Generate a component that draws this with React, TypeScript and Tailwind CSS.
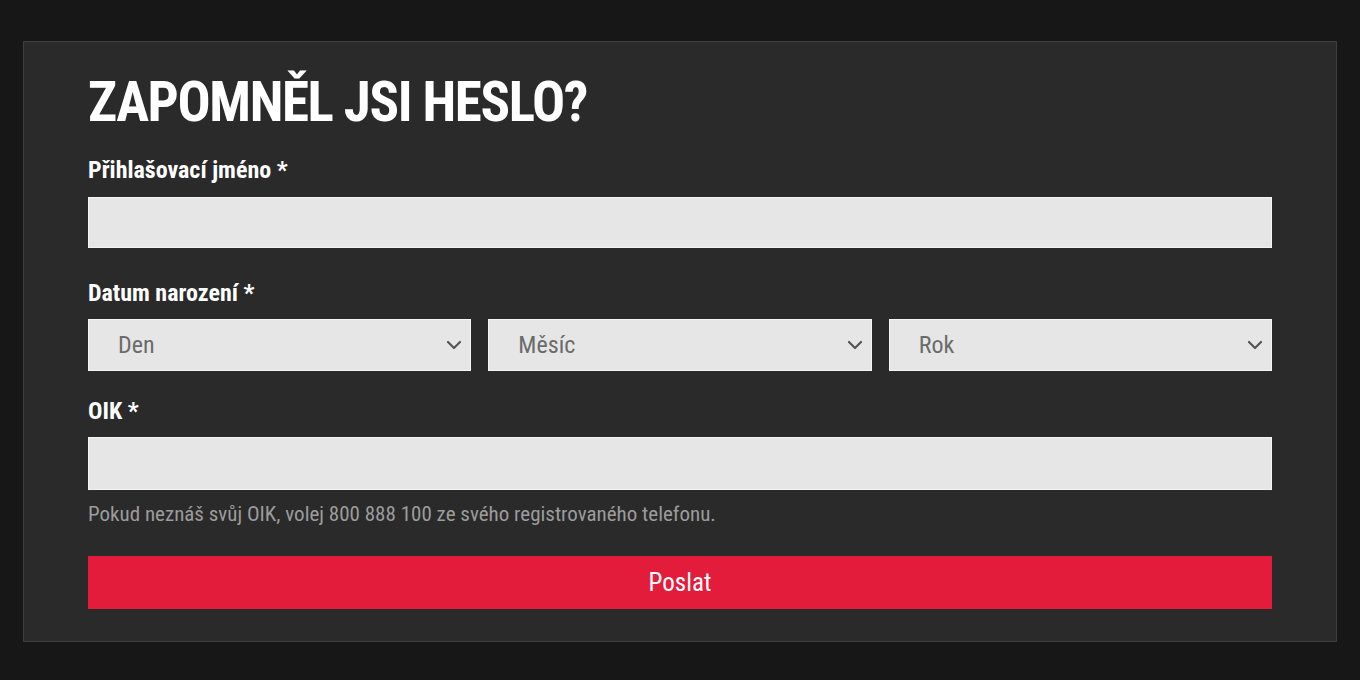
import React from 'react';

const font = { fontFamily: '"Roboto Condensed", Roboto, "Liberation Sans Narrow", sans-serif' };

const Chevron: React.FC = () => (
    <svg className="w-[16px] h-[10px] text-[#555]" viewBox="0 0 16 10" fill="none" stroke="currentColor" strokeWidth={2.2}>
        <path d="M2 2l6 6 6-6" strokeLinecap="round" strokeLinejoin="round" />
    </svg>
);

const SelectBox: React.FC<{ label: string }> = ({ label }) => (
    <div className="flex items-center justify-between h-[52px] bg-[#e6e6e6] border border-[#f4f4f4] pl-[29px] pr-[8px]">
        <span className="text-[24px] text-[#6b6b6b]">{label}</span>
        <Chevron />
    </div>
);

const Label: React.FC<{ text: string; className: string }> = ({ text, className }) => (
    <label className={`block text-[24px] leading-[36px] font-bold text-white ${className}`}>{text}</label>
);

const App: React.FC = () => {
    return (
        <div className="min-h-screen bg-[#171717] pt-[41px] px-[23px]" style={font}>
            <div className="bg-[#2a2a2a] border border-[#3e3e3e] px-[64px] pt-[33px] pb-[32px] font-stretch-condensed">
                <h1 className="text-[55px] leading-none font-bold text-white tracking-tight">ZAPOMNĚL JSI HESLO?</h1>
                <Label text="Přihlašovací jméno *" className="mt-[22px]" />
                <div className="mt-[9px] h-[51px] bg-[#e6e6e6] border border-[#f4f4f4]"></div>
                <Label text="Datum narození *" className="mt-[27px]" />
                <div className="mt-[8px] grid grid-cols-3 gap-[17px]">
                    <SelectBox label="Den" />
                    <SelectBox label="Měsíc" />
                    <SelectBox label="Rok" />
                </div>
                <Label text="OIK *" className="mt-[22px]" />
                <div className="mt-[8px] h-[53px] bg-[#e6e6e6] border border-[#f4f4f4]"></div>
                <p className="mt-[8px] text-[21px] leading-[32px] text-[#9c9c9c]">Pokud neznáš svůj OIK, volej 800 888 100 ze svého registrovaného telefonu.</p>
                <button className="mt-[26px] w-full h-[53px] bg-[#e31c3b] text-white text-[25px]">Poslat</button>
            </div>
        </div>
    );
};

export default App;
